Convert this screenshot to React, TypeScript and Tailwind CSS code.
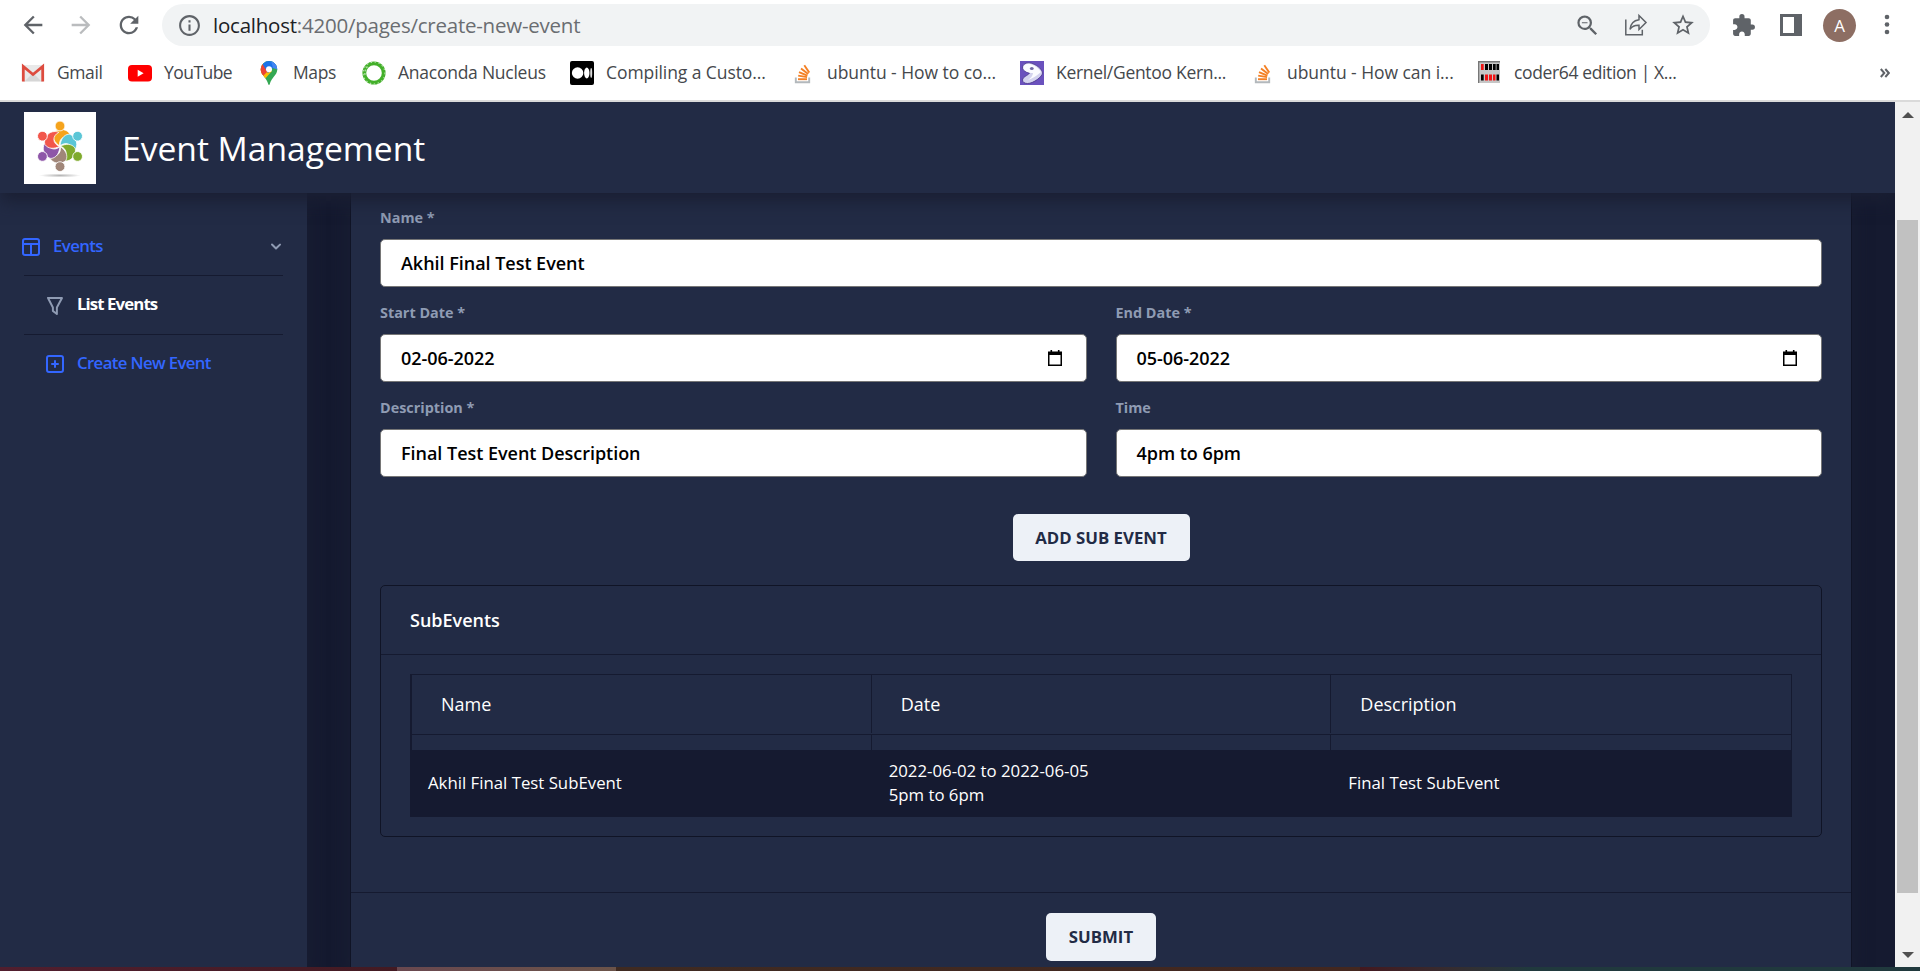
import type { ReactNode } from "react";
import { MdArrowBack, MdArrowForward, MdRefresh, MdInfoOutline, MdZoomOut, MdStarOutline, MdExtension } from "react-icons/md";

const GmailIcon = () => (
  <svg width="24" height="24" viewBox="0 0 24 24">
    <rect x="2" y="4" width="20" height="17" rx="1" fill="#e9e9e9" />
    <path d="M4 20l8-8 8 8z" fill="#d6d6d6" />
    <path d="M2.3 20.5V5.5L12 13.5 21.7 5.5V20.5" fill="none" stroke="#dd4b3e" strokeWidth="2.8" />
  </svg>
);

const YouTubeIcon = () => (
  <svg width="24" height="24" viewBox="0 0 24 24">
    <rect x="0" y="4" width="24" height="16.5" rx="4" fill="#f00" />
    <path d="M9.7 8.7v7L15.6 12.200z" fill="#fff" />
  </svg>
);

const MapsIcon = () => (
  <svg width="24" height="24" viewBox="0 0 24 24">
    <clipPath id="pin">
      <path d="M12 0a8.300 8.300 0 0 0-8.300 8.300c0 6 5.800 8 7.500 14.700.3 1.200 1.300 1.200 1.600 0 1.700-6.700 7.500-8.700 7.500-14.700A8.300 8.300 0 0 0 12 0z" />
    </clipPath>
    <g clipPath="url(#pin)">
      <rect width="24" height="24" fill="#34a853" />
      <path d="M0 4L6 3l9 7L6 20 0 14z" fill="#fbbc04" />
      <path d="M5.500 3L12 9 6 15 0 9z" fill="#ea4335" />
      <path d="M5.500 3L9 0l6-1 8 5-7 3-5 5z" fill="#1a73e8" />
      <path d="M14 0l8 4v5l-6-2z" fill="#4285f4" />
      <circle cx="12" cy="8.200" r="3" fill="#fff" />
    </g>
  </svg>
);

const AnacondaIcon = () => (
  <svg width="24" height="24" viewBox="0 0 24 24">
    <circle cx="12" cy="12" r="9.700" fill="none" stroke="#43b02a" strokeWidth="3.800" />
    <circle cx="12" cy="12" r="11" fill="none" stroke="#b9e2ae" strokeWidth="1.200" strokeDasharray="1.500 2.500" />
    <path d="M5.500 5.500a9.500 9.500 0 0 0-2 10" fill="none" stroke="#a8d99b" strokeWidth="1.500" strokeDasharray="2 1.500" />
  </svg>
);

const MediumIcon = () => (
  <svg width="24" height="24" viewBox="0 0 24 24">
    <rect width="24" height="24" rx="2" fill="#000" />
    <circle cx="7.600" cy="12" r="5.700" fill="#fff" />
    <ellipse cx="16.800" cy="12" rx="2.700" ry="5.400" fill="#fff" />
    <ellipse cx="21.200" cy="12" rx="1" ry="4.900" fill="#ddd" />
  </svg>
);

const StackIcon = () => (
  <svg width="24" height="24" viewBox="0 0 24 24" fill="none">
    <path d="M4.800 16.500v4.700h13.400v-4.700" stroke="#b3b8bc" strokeWidth="1.900" />
    <g stroke="#f48024" strokeWidth="1.900">
      <path d="M7 18.200h9" />
      <path d="M7.200 14.600l8.900 1.500" />
      <path d="M8 11.200l8.400 3.500" />
      <path d="M10 7.400l7.200 5.700" />
      <path d="M13.300 4.200l5 7.400" />
    </g>
  </svg>
);

const GentooIcon = () => (
  <svg width="24" height="24" viewBox="0 0 24 24">
    <rect width="24" height="24" fill="#6a51bd" />
    <path d="M2.500 6C3.500 2 8.500.8 13 2.800c5 2 9 5.500 9.500 9.200 0 3.500-9 10.500-15 10.500-3 0-5-1.500-5-3.500 0-3 5.500-4.500 7-7C6.500 11 1.800 9.500 2.500 6z" fill="#d3d2ee" stroke="#463486" strokeWidth="0.800" />
    <path d="M3.500 5.500C5 2.500 9 2.200 12.500 3.800c3.500 1.500 6.500 4 8.500 7.200-4 3.500-8 6.500-13 8 2.500-2 5-4 5-7C9 12 2.800 10.500 3.500 5.500z" fill="#fbfbff" />
    <ellipse cx="11.800" cy="7.600" rx="1.900" ry="1.500" fill="#6f69a4" />
  </svg>
);

const CoderIcon = () => (
  <svg width="24" height="24" viewBox="0 0 24 24">
    <rect x="0" y="0" width="22" height="22" fill="#c6c6c6" />
    <path d="M.6 22V.7H22" fill="none" stroke="#777" strokeWidth="1.400" />
    <g fill="#000">
      <path d="M7 3h3v6H7zM11 3h3v6h-3zM15 3h2.700v6H15zM18.500 3H21v6h-2.500zM3 13.500h2.700v6H3zM18.500 13.500H21v6h-2.500z" />
    </g>
    <path d="M3 3h2.700v6H3zM7 13.500h3v6H7zM11 13.500h3v6h-3zM15 13.500h2.500v6H15z" fill="#f01414" />
  </svg>
);

const ShareIcon = () => (
  <svg width="24" height="24" viewBox="0 0 24 24" fill="none" stroke="#5f6368" strokeWidth="1.500">
    <path d="M1.800 6.500v15.200h16.500v-5" />
    <path d="M15 2.500l7 7-7 7v-4.200c-4.500-.2-7 1-9 4C6.500 11 9.500 7.500 15 6.700z" strokeLinejoin="miter" />
  </svg>
);

const LAYOUT = "M18 3H6a3 3 0 0 0-3 3v12a3 3 0 0 0 3 3h12a3 3 0 0 0 3-3V6a3 3 0 0 0-3-3zM6 5h12a1 1 0 0 1 1 1v2H5V6a1 1 0 0 1 1-1zM5 18v-8h6v9H6a1 1 0 0 1-1-1zm13 1h-5v-9h6v8a1 1 0 0 1-1 1z";
const FUNNEL = "M13.900 22a1 1 0 0 1-.6-.2l-4-3.050a1 1 0 0 1-.39-.8v-3.270l-4.800-9.220A1 1 0 0 1 5 4h14a1 1 0 0 1 .86.49 1 1 0 0 1 0 1l-5 9.210V21a1 1 0 0 1-.55.9 1 1 0 0 1-.41.1zm-3-4.540l2 1.530v-4.550A1 1 0 0 1 13 14l4.300-8H6.640l4.130 8a1 1 0 0 1 .11.46z";
const PLUS = "M18 3H6a3 3 0 0 0-3 3v12a3 3 0 0 0 3 3h12a3 3 0 0 0 3-3V6a3 3 0 0 0-3-3zm1 15a1 1 0 0 1-1 1H6a1 1 0 0 1-1-1V6a1 1 0 0 1 1-1h12a1 1 0 0 1 1 1zM15 11h-2V9a1 1 0 0 0-2 0v2H9a1 1 0 0 0 0 2h2v2a1 1 0 0 0 2 0v-2h2a1 1 0 0 0 0-2z";
const CHEVRON = "M12 15.500a1 1 0 0 1-.71-.29l-4-4a1 1 0 1 1 1.420-1.420L12 13.100l3.300-3.180a1 1 0 1 1 1.380 1.440l-4 3.860a1 1 0 0 1-.68.28z";

const Glyph = ({ d, className }: { d: string; className: string }) => (
  <svg width="24" height="24" viewBox="0 0 24 24" fill="currentColor" className={className}>
    <path d={d} />
  </svg>
);

const PEOPLE = ["#f5a31c", "#5bc6d6", "#7faa2c", "#a08679", "#8e56a8", "#f2564b"];

const Logo = () => (
  <svg width="72" height="72" viewBox="0 0 72 72">
    <defs>
      <radialGradient id="ground">
        <stop offset="0" stopColor="#b5b5b5" />
        <stop offset="1" stopColor="#fff" />
      </radialGradient>
    </defs>
    <rect width="72" height="72" fill="#fff" />
    <ellipse cx="36" cy="63.500" rx="21" ry="2" fill="url(#ground)" />
    {PEOPLE.map((color, i) => (
      <g key={color} transform={`translate(36 34.300) rotate(${i * 60})`} fill={color}>
        <path d="M-6-14C-2.500-17.500 3-17.600 7-15.300 10-13.300 11.500-10 11.500-8 5.500-12-1.500-8.500-.4-.4-5-3.500-8.500-8.500-6-14z" stroke="#fff" strokeWidth="0.700" />
        <circle cx="0" cy="-20.300" r="4.900" stroke="#fff" strokeWidth="0.800" />
      </g>
    ))}
  </svg>
);

type Bookmark = { icon: ReactNode; text: string; width: string; track: string };

const BOOKMARKS: Bookmark[] = [
  { icon: <GmailIcon />, text: "Gmail", width: "w-[107px]", track: "tracking-[-0.4px]" },
  { icon: <YouTubeIcon />, text: "YouTube", width: "w-[129px]", track: "tracking-[-0.55px]" },
  { icon: <MapsIcon />, text: "Maps", width: "w-[105px]", track: "tracking-[-0.4px]" },
  { icon: <AnacondaIcon />, text: "Anaconda Nucleus", width: "w-[208px]", track: "tracking-[-0.25px]" },
  { icon: <MediumIcon />, text: "Compiling a Custo...", width: "w-[221px]", track: "tracking-[-0.08px]" },
  { icon: <StackIcon />, text: "ubuntu - How to co...", width: "w-[229px]", track: "tracking-[-0.05px]" },
  { icon: <GentooIcon />, text: "Kernel/Gentoo Kern...", width: "w-[231px]", track: "tracking-[-0.3px]" },
  { icon: <StackIcon />, text: "ubuntu - How can i...", width: "w-[227px]", track: "tracking-[-0.05px]" },
  { icon: <CoderIcon />, text: "coder64 edition | X...", width: "w-[220px]", track: "tracking-[-0.37px]" },
];

const BrowserChrome = () => (
  <div className="h-[102px] shrink-0 border-b-2 border-[#dadada] bg-white">
    <div className="flex h-[50px] items-center pl-[19px] text-[#5f6368]">
      <MdArrowBack className="size-[28px]" />
      <MdArrowForward className="ml-[20px] size-[28px] text-[#babcbe]" />
      <MdRefresh className="ml-[20px] size-[28px]" />
      <div className="ml-[19px] flex h-[42px] w-[1548px] items-center rounded-full bg-[#f1f3f4] pl-[15px]">
        <MdInfoOutline className="size-[25px]" />
        <div className="-mt-px ml-[11px] w-[1359px] text-[20.500px] leading-[30px] tracking-[-0.230px] whitespace-nowrap text-[#6a6d71]">
          <span className="text-[#202124]">localhost</span>:4200/pages/create-new-event
        </div>
        <MdZoomOut className="ml-[2px] size-[27px]" />
        <span className="ml-[23px]"><ShareIcon /></span>
        <MdStarOutline className="ml-[22px] size-[26px]" />
      </div>
      <MdExtension className="ml-[21px] size-[25px]" />
      <svg className="ml-[24px]" width="22" height="22" viewBox="0 0 22 22">
        <path d="M1.500 1.500h13v19h-13z" fill="#fff" />
        <path d="M0 0h22v22H0zM3 3v16h11V3z" fill="#5f6368" fillRule="evenodd" />
      </svg>
      <span className="mt-[1px] ml-[21px] flex size-[33px] items-center justify-center rounded-full bg-[#8d6e63] text-[17px] text-white">A</span>
      <svg className="ml-[28px]" width="6" height="22" viewBox="0 0 6 22" fill="#5f6368">
        <circle cx="3" cy="3" r="2.300" />
        <circle cx="3" cy="10.500" r="2.300" />
        <circle cx="3" cy="18" r="2.300" />
      </svg>
    </div>
    <div className="flex h-[46px] items-center pl-[21px] text-[17.500px] text-[#45484c]">
      {BOOKMARKS.map((b) => (
        <div key={b.text} className={`flex shrink-0 items-center gap-3 ${b.width}`}>
          <span className="shrink-0">{b.icon}</span>
          <span className={`-mt-[2px] whitespace-nowrap ${b.track}`}>{b.text}</span>
        </div>
      ))}
      <svg className="ml-[182px]" width="10" height="10" viewBox="0 0 10 10" fill="none" stroke="#5f6368" strokeWidth="2">
        <path d="M.8 1l3.500 4-3.500 4M5.300 1l3.500 4-3.500 4" />
      </svg>
    </div>
  </div>
);

const Sidebar = () => (
  <aside className="z-[5] w-[307px] shrink-0 bg-[#222b45] px-6 pt-[28px] text-[16.800px] font-semibold shadow-[0_8px_16px_0_#1a1f33]">
    <div className="-ml-[5px] flex h-[54px] items-center pb-[3px]">
      <Glyph d={LAYOUT} className="text-[#3366ff]" />
      <span className="-mt-[2px] ml-[10px] flex-1 tracking-[-0.600px] text-[#3366ff]">Events</span>
      <Glyph d={CHEVRON} className="-mt-[2px] -mr-[5px] text-[#8f9bb3]" />
    </div>
    <div className="flex h-[59px] items-center border-t border-[#151a30] pl-[19px]">
      <Glyph d={FUNNEL} className="text-[#8f9bb3]" />
      <span className="-mt-[2px] ml-[10px] font-bold tracking-[-0.900px] text-white">List Events</span>
    </div>
    <div className="flex h-[59px] items-center border-t border-[#151a30] pl-[19px]">
      <Glyph d={PLUS} className="text-[#3366ff]" />
      <span className="-mt-[2px] ml-[10px] tracking-[-0.640px] text-[#3366ff]">Create New Event</span>
    </div>
  </aside>
);

const Field = ({ label, value, date }: { label: string; value: string; date?: boolean }) => (
  <div className="flex-1">
    <div className="mb-[12px] text-[14.400px] leading-[18px] font-bold text-[#8f9bb3]">{label}</div>
    <div className="flex h-12 items-center justify-between rounded-[5px] border border-[#767676] bg-white pr-[24px] pl-5 text-[18px] font-semibold tracking-[-0.030px] text-black">
      <span>{value}</span>
      {date && (
        <svg width="14" height="16" viewBox="0 0 14 16">
          <path d="M2.500 0h1.600v1.500h5.800V0h1.600v1.500H14V16H0V1.500h2.500zM1.500 5v9.500h11V5z" fill="#000" fillRule="evenodd" />
        </svg>
      )}
    </div>
  </div>
);

const ActionButton = ({ children, className }: { children: ReactNode; className: string }) => (
  <button className={`mx-auto block rounded-[5px] bg-[#edf1f7] text-[16.800px] font-bold text-[#222b45] ${className}`}>{children}</button>
);

const HEADS = ["Name", "Date", "Description"];

const SubEvents = () => (
  <section className="mt-6 h-[252px] rounded-[5px] border border-[#101426] text-white">
    <h2 className="flex h-[69px] items-center border-b border-[#151a30] px-[29px] text-[18px] font-semibold">SubEvents</h2>
    <div className="mx-[29px] mt-[19px] border-t border-r border-l-2 border-[#151a30]">
      <div className="grid h-[60px] grid-cols-3 divide-x divide-[#151a30] border-b border-[#151a30] pb-[1px] text-[18px]">
        {HEADS.map((h) => (
          <div key={h} className="flex items-center pl-[29px]">{h}</div>
        ))}
      </div>
      <div className="grid h-[15px] grid-cols-3 divide-x divide-[#151a30]">
        <div /><div /><div />
      </div>
      <div className="grid h-[67px] grid-cols-3 items-center bg-[#151a30] pb-[2px] text-[16.800px] leading-6">
        <div className="pl-4">Akhil Final Test SubEvent</div>
        <div className="pl-[17px]">2022-06-02 to 2022-06-05<br />5pm to 6pm</div>
        <div className="pl-[17px]">Final Test SubEvent</div>
      </div>
    </div>
  </section>
);

export default function App() {
  return (
    <div className="flex h-[971px] w-[1920px] flex-col overflow-hidden bg-[#151a30] font-['Open_Sans',sans-serif]">
      <BrowserChrome />
      <div className="flex h-[865px] shrink-0">
        <div className="flex w-[1895px] flex-col overflow-hidden">
          <header className="z-10 flex h-[91px] shrink-0 items-center bg-[#222b45] pt-[1px] pl-6 shadow-[0_8px_16px_0_#1a1f33]">
            <Logo />
            <h1 className="mt-[1px] ml-[26px] text-[33.600px] text-white">Event Management</h1>
          </header>
          <div className="flex min-h-0 flex-1">
            <Sidebar />
            <main className="ml-[43px] w-[1502px] border-x border-[#101426] bg-[#222b45] shadow-[0_8px_16px_0_#1a1f33]">
              <form className="px-[29px] pt-[16px]">
                <div className="flex"><Field label="Name *" value="Akhil Final Test Event" /></div>
                <div className="mt-[17px] flex gap-[29px]">
                  <Field label="Start Date *" value="02-06-2022" date />
                  <Field label="End Date *" value="05-06-2022" date />
                </div>
                <div className="mt-[17px] flex gap-[29px]">
                  <Field label="Description *" value="Final Test Event Description" />
                  <Field label="Time" value="4pm to 6pm" />
                </div>
                <ActionButton className="mt-[37px] h-[47px] w-[177px]">ADD SUB EVENT</ActionButton>
                <SubEvents />
              </form>
              <footer className="mt-[55px] border-t border-[#151a30] pt-5">
                <ActionButton className="h-12 w-[110px]">SUBMIT</ActionButton>
              </footer>
            </main>
          </div>
        </div>
        <div className="flex w-[25px] flex-col items-center bg-[#f1f1f1]">
          <svg className="mt-[10px]" width="12" height="6" viewBox="0 0 12 6"><path d="M6 0l6 6H0z" fill="#505050" /></svg>
          <div className="mt-[102px] h-[673px] w-[21px] bg-[#c1c1c1]" />
          <svg className="mt-[59px]" width="12" height="6" viewBox="0 0 12 6"><path d="M0 0h12L6 6z" fill="#505050" /></svg>
        </div>
      </div>
      <div className="flex h-1 shrink-0">
        <div className="w-[397px] bg-linear-to-r from-[#511e2e] to-[#431a22]" />
        <div className="w-[219px] bg-linear-to-r from-[#69484f] to-[#6b5349]" />
        <div className="w-[744px] bg-linear-to-r from-[#3f2a21] to-[#43271f]" />
        <div className="flex-1 bg-linear-to-r from-[#43181f] via-[#20393d] via-30% to-[#20393d]" />
      </div>
    </div>
  );
}
